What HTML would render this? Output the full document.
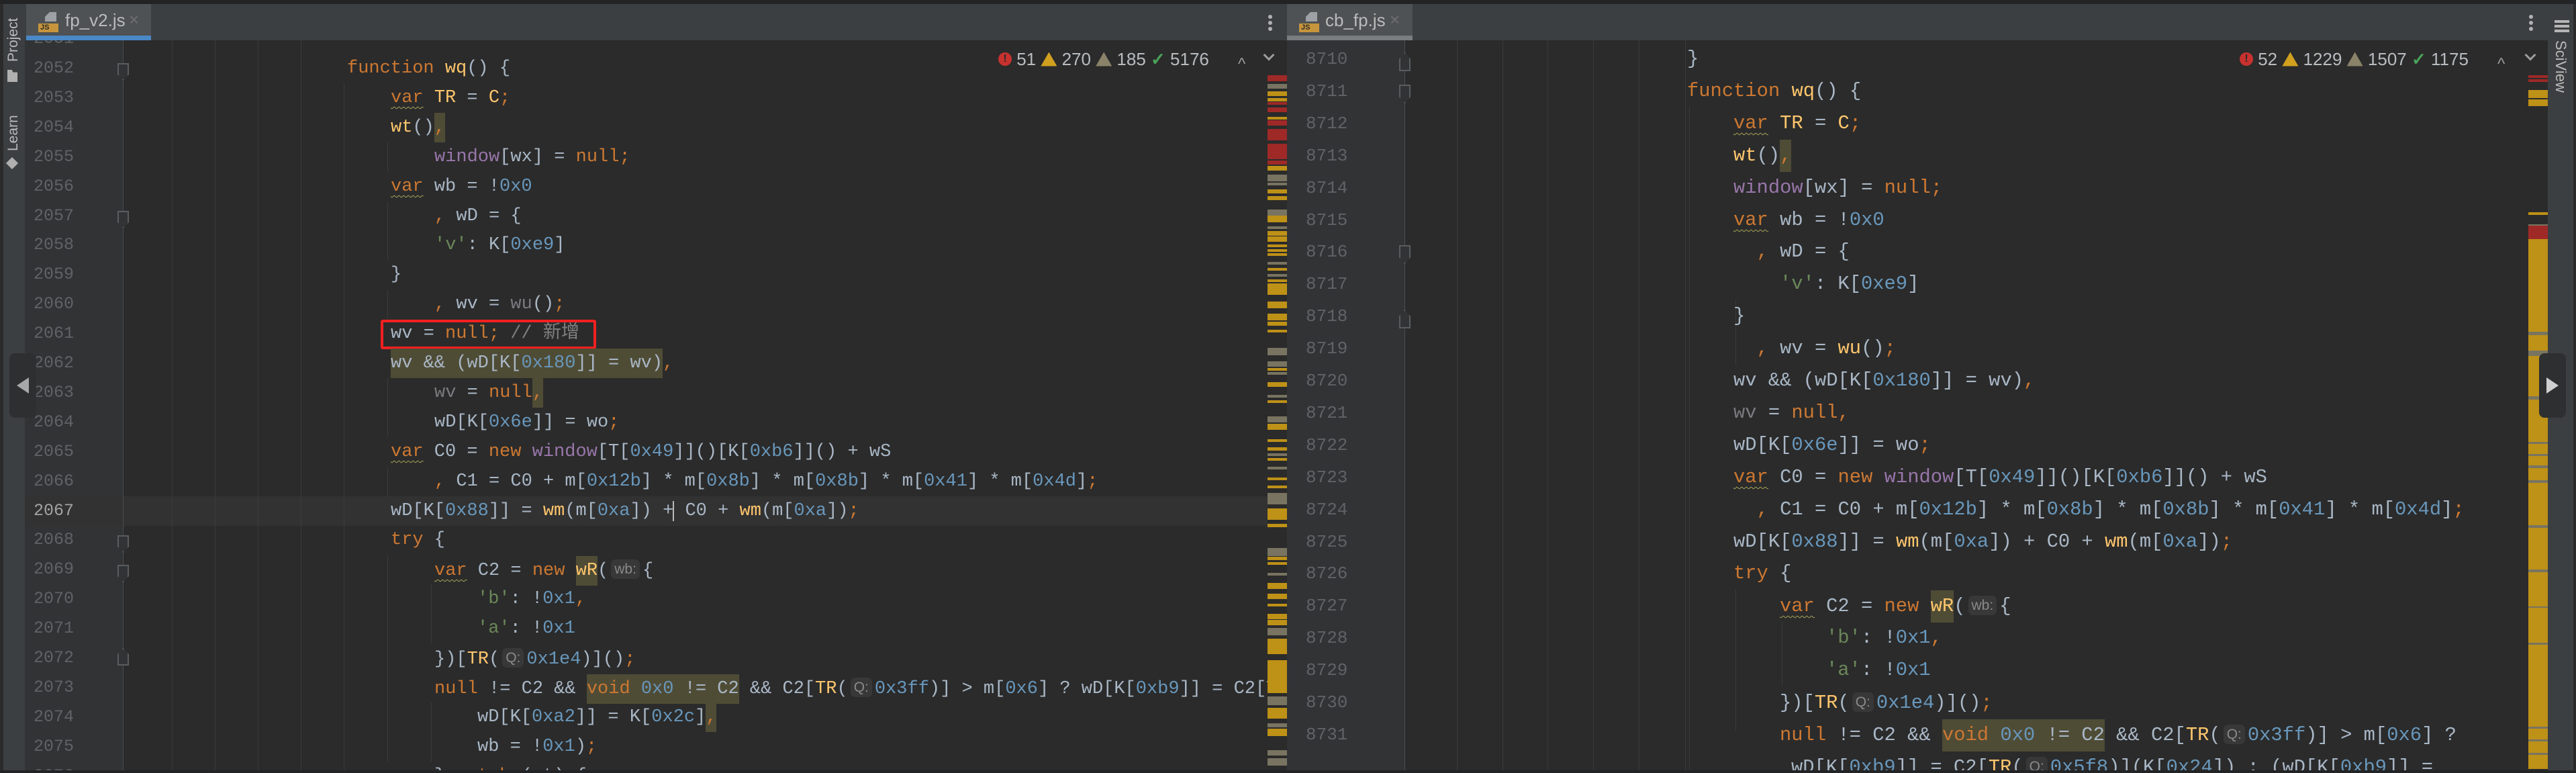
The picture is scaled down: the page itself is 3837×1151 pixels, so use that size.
<!DOCTYPE html>
<html><head><meta charset="utf-8"><style>
*{margin:0;padding:0;box-sizing:border-box}
body{width:3837px;height:1151px;background:#2b2b2b;position:relative;overflow:hidden;font-family:"Liberation Sans",sans-serif}
.a{position:absolute}
.lp{position:absolute;left:0;top:60px;width:1888px;height:1087px;overflow:hidden}
.rp{position:absolute;left:1917px;top:60px;width:1849px;height:1087px;overflow:hidden}
.l{position:absolute;white-space:pre;font-family:"Liberation Mono","Noto Sans CJK SC",monospace;color:#a9b7c6}
.lp .l{font-size:27px;line-height:44px;height:44px}
.rp .l{font-size:28.8px;line-height:48px;height:48px}
.ln{position:absolute;font-family:"Liberation Mono",monospace;color:#606366;white-space:pre}
.lp .ln{font-size:25px;line-height:44px;left:50px}
.rp .ln{font-size:26px;line-height:48px;left:28px}
.k{color:#cc7832}.n{color:#6897bb}.s{color:#6a8759}.f{color:#ffc66d}.p{color:#9876aa}.c{color:#808080}.g{color:#7a7a80}
.w{text-decoration:underline wavy #a8a45a;text-decoration-thickness:1px;text-underline-offset:6px}
.h{background:#4f4c36;display:inline-block}
.hint{font-family:"Liberation Sans",sans-serif;font-size:21px;color:#8a8a8a;background:#383838;border-radius:7px;padding:3px 5px;margin:0 4px;vertical-align:2px}
.gd{position:absolute;width:1px;background:#393b3c}
.sm{position:absolute;height:6px}
.y{background:#be9117}.r{background:#9e2927}.q{background:#787461}
.st{position:absolute;top:70px;height:36px;display:flex;align-items:center;font-size:26px;color:#b8bcc0;white-space:pre}
</style></head><body>
<div class="a" style="left:0;top:0;width:3837px;height:6px;background:#222325"></div>
<div class="a" style="left:0;top:6px;width:3837px;height:54px;background:#3c3f41"></div>
<div class="a" style="left:0;top:1147px;width:3837px;height:4px;background:#222325"></div>
<div class="a" style="left:0;top:6px;width:5px;height:1141px;background:#2b2b2b"></div>
<div class="a" style="left:5px;top:6px;width:33px;height:1141px;background:#3c3f41"></div>
<div class="a" style="left:8px;top:92px;transform:rotate(-90deg);transform-origin:left top;font-size:21px;color:#bbbbbb;white-space:pre">Project</div>
<div class="a" style="left:11px;top:104px;width:15px;height:18px;background:#b0b0b0;clip-path:polygon(0 0,45% 0,55% 20%,100% 20%,100% 100%,0 100%)"></div>
<div class="a" style="left:8px;top:225px;transform:rotate(-90deg);transform-origin:left top;font-size:21px;color:#bbbbbb;white-space:pre">Learn</div>
<div class="a" style="left:10px;top:235px;width:16px;height:16px;background:#b0b0b0;transform:rotate(45deg) scale(.8)"></div>
<div class="a" style="left:3795px;top:6px;width:38px;height:1141px;background:#3c3f41"></div>
<div class="a" style="left:3833px;top:6px;width:4px;height:1141px;background:#2b2b2b"></div>
<div class="a" style="left:3805px;top:30px;width:22px;height:18px;background:repeating-linear-gradient(#b5b5b5 0 4px,transparent 4px 7px)"></div>
<div class="a" style="left:3827px;top:60px;transform:rotate(90deg);transform-origin:left top;font-size:22px;color:#bbbbbb;white-space:pre">SciView</div>
<div class="a" style="left:39px;top:6px;width:186px;height:54px;background:#4e5254"></div>
<div class="a" style="left:39px;top:53px;width:186px;height:7px;background:#4a88c7"></div>
<div class="a" style="left:1917px;top:6px;width:187px;height:54px;background:#4e5254"></div>
<div class="a" style="left:1917px;top:53px;width:187px;height:7px;background:#7a7d80"></div>
<div class="a" style="left:67px;top:18px;width:17px;height:14px;background:#9da0a4;clip-path:polygon(40% 0,100% 0,100% 100%,0 100%,0 50%)"></div>
<div class="a" style="left:57px;top:35px;width:30px;height:13px;background:#c7953c;font-size:11px;color:#2b2b2b;line-height:13px;padding-left:3px;font-weight:bold">JS</div>
<div class="a" style="left:97px;top:15px;font-size:26px;color:#bbbbbb">fp_v2.js</div>
<div class="a" style="left:192px;top:14px;font-size:26px;color:#6e6e6e">×</div>
<div class="a" style="left:1945px;top:18px;width:17px;height:14px;background:#9da0a4;clip-path:polygon(40% 0,100% 0,100% 100%,0 100%,0 50%)"></div>
<div class="a" style="left:1935px;top:35px;width:30px;height:13px;background:#c7953c;font-size:11px;color:#2b2b2b;line-height:13px;padding-left:3px;font-weight:bold">JS</div>
<div class="a" style="left:1974px;top:15px;font-size:26px;color:#bbbbbb">cb_fp.js</div>
<div class="a" style="left:2070px;top:14px;font-size:26px;color:#6e6e6e">×</div>
<div class="a" style="left:1889px;top:22px;width:6px;height:6px;border-radius:3px;background:#afb1b3;box-shadow:0 9px 0 #afb1b3,0 18px 0 #afb1b3"></div>
<div class="a" style="left:3767px;top:22px;width:6px;height:6px;border-radius:3px;background:#afb1b3;box-shadow:0 9px 0 #afb1b3,0 18px 0 #afb1b3"></div>

<div class="lp">
<div class="a" style="left:37px;top:0;width:146px;height:1087px;background:#313335"></div>
<div class="a" style="left:37px;top:679px;width:1851px;height:44px;background:#323232"></div>
<div class="gd" style="left:183px;top:0;height:1087px;background:#4a4c4e"></div>
<div class="gd" style="left:256px;top:0;height:1087px"></div>
<div class="gd" style="left:320px;top:0;height:1087px"></div>
<div class="gd" style="left:384px;top:0;height:1087px"></div>
<div class="gd" style="left:448px;top:0;height:1087px"></div>
<div class="gd" style="left:512px;top:64px;height:1023px"></div>
<div class="gd" style="left:577px;top:152px;height:44px"></div>
<div class="gd" style="left:577px;top:240px;height:88px"></div>
<div class="gd" style="left:577px;top:371px;height:44px"></div>
<div class="gd" style="left:577px;top:503px;height:88px"></div>
<div class="gd" style="left:577px;top:635px;height:44px"></div>
<div class="gd" style="left:577px;top:766px;height:308px"></div>
<div class="gd" style="left:642px;top:810px;height:88px"></div>
<div class="gd" style="left:642px;top:986px;height:88px"></div>
<div class="a" style="left:175px;top:34px;width:17px;height:26px;border:2px solid #5a5d60;clip-path:polygon(0 0,100% 0,100% 65%,50% 100%,0 65%);background:#313335"></div>
<div class="a" style="left:175px;top:254px;width:17px;height:26px;border:2px solid #5a5d60;clip-path:polygon(0 0,100% 0,100% 65%,50% 100%,0 65%);background:#313335"></div>
<div class="a" style="left:175px;top:737px;width:17px;height:26px;border:2px solid #5a5d60;clip-path:polygon(0 0,100% 0,100% 65%,50% 100%,0 65%);background:#313335"></div>
<div class="a" style="left:175px;top:781px;width:17px;height:26px;border:2px solid #5a5d60;clip-path:polygon(0 0,100% 0,100% 65%,50% 100%,0 65%);background:#313335"></div>
<div class="a" style="left:175px;top:905px;width:17px;height:26px;border:2px solid #5a5d60;clip-path:polygon(50% 0,100% 35%,100% 100%,0 100%,0 35%);background:#313335"></div>
<div class="ln" style="top:-24px">2051</div>
<div class="ln" style="top:20px">2052</div><div class="ln" style="top:64px">2053</div><div class="ln" style="top:108px">2054</div><div class="ln" style="top:152px">2055</div><div class="ln" style="top:196px">2056</div><div class="ln" style="top:240px">2057</div><div class="ln" style="top:283px">2058</div><div class="ln" style="top:327px">2059</div><div class="ln" style="top:371px">2060</div><div class="ln" style="top:415px">2061</div><div class="ln" style="top:459px">2062</div><div class="ln" style="top:503px">2063</div><div class="ln" style="top:547px">2064</div><div class="ln" style="top:591px">2065</div><div class="ln" style="top:635px">2066</div><div class="ln" style="top:679px;color:#a4a3a3">2067</div><div class="ln" style="top:722px">2068</div><div class="ln" style="top:766px">2069</div><div class="ln" style="top:810px">2070</div><div class="ln" style="top:854px">2071</div><div class="ln" style="top:898px">2072</div><div class="ln" style="top:942px">2073</div><div class="ln" style="top:986px">2074</div><div class="ln" style="top:1030px">2075</div><div class="ln" style="top:1074px">2076</div>
<div class="l" style="top:20px;left:517px"><span class="k">function </span><span class="f">wq</span>() {</div>
<div class="l" style="top:64px;left:582px"><span class="k w">var</span> <span class="f">TR</span> = <span class="f">C</span><span class="k">;</span></div>
<div class="l" style="top:108px;left:582px"><span class="f">wt</span>()<span class="k h">,</span></div>
<div class="l" style="top:152px;left:647px"><span class="p">window</span>[wx] = <span class="k">null;</span></div>
<div class="l" style="top:196px;left:582px"><span class="k w">var</span> wb = !<span class="n">0x0</span></div>
<div class="l" style="top:240px;left:647px"><span class="k">,</span> wD = {</div>
<div class="l" style="top:283px;left:647px"><span class="s">'v'</span>: K[<span class="n">0xe9</span>]</div>
<div class="l" style="top:327px;left:582px">}</div>
<div class="l" style="top:371px;left:647px"><span class="k">,</span> wv = <span class="g">wu</span>()<span class="k">;</span></div>
<div class="l" style="top:415px;left:582px">wv = <span class="k">null;</span> <span class="c">// 新增</span></div>
<div class="a" style="left:567px;top:416px;width:321px;height:44px;border:4px solid #f22020;border-radius:3px"></div>
<div class="l" style="top:459px;left:582px"><span class="h">wv &amp;&amp; (wD[K[<span class="n">0x180</span>]] = wv)</span><span class="k">,</span></div>
<div class="l" style="top:503px;left:647px"><span class="g">wv</span> = <span class="k">null</span><span class="k h">,</span></div>
<div class="l" style="top:547px;left:647px">wD[K[<span class="n">0x6e</span>]] = wo<span class="k">;</span></div>
<div class="l" style="top:591px;left:582px"><span class="k w">var</span> C0 = <span class="k">new </span><span class="p">window</span>[T[<span class="n">0x49</span>]]()[K[<span class="n">0xb6</span>]]() + wS</div>
<div class="l" style="top:635px;left:647px"><span class="k">,</span> C1 = C0 + m[<span class="n">0x12b</span>] * m[<span class="n">0x8b</span>] * m[<span class="n">0x8b</span>] * m[<span class="n">0x41</span>] * m[<span class="n">0x4d</span>]<span class="k">;</span></div>
<div class="l" style="top:679px;left:582px">wD[K[<span class="n">0x88</span>]] = <span class="f">wm</span>(m[<span class="n">0xa</span>]) +<span style="border-left:2px solid #bbbbbb;margin-left:-1px"></span> C0 + <span class="f">wm</span>(m[<span class="n">0xa</span>])<span class="k">;</span></div>
<div class="l" style="top:722px;left:582px"><span class="k">try</span> {</div>
<div class="l" style="top:766px;left:647px"><span class="k w">var</span> C2 = <span class="k">new </span><span class="f h">wR</span>(<span class="hint">wb:</span>{</div>
<div class="l" style="top:810px;left:711px"><span class="s">'b'</span>: !<span class="n">0x1</span><span class="k">,</span></div>
<div class="l" style="top:854px;left:711px"><span class="s">'a'</span>: !<span class="n">0x1</span></div>
<div class="l" style="top:898px;left:647px">})[<span class="f">TR</span>(<span class="hint">Q:</span><span class="n">0x1e4</span>)]()<span class="k">;</span></div>
<div class="l" style="top:942px;left:647px"><span class="k">null</span> != C2 &amp;&amp; <span class="h"><span class="k">void </span><span class="n">0x0</span> != C2</span> &amp;&amp; C2[<span class="f">TR</span>(<span class="hint">Q:</span><span class="n">0x3ff</span>)] &gt; m[<span class="n">0x6</span>] ? wD[K[<span class="n">0xb9</span>]] = C2[<span class="f">TR</span>(</div>
<div class="l" style="top:986px;left:711px">wD[K[<span class="n">0xa2</span>]] = K[<span class="n">0x2c</span>]<span class="k h">,</span></div>
<div class="l" style="top:1030px;left:711px">wb = !<span class="n">0x1</span>)<span class="k">;</span></div>
<div class="l" style="top:1074px;left:647px">} <span class="k">catch</span> (wt) {</div>
</div>
<div class="st" style="left:1487px">
<span style="width:20px;height:20px;border-radius:10px;background:#c7322f;color:#2b2b2b;font-size:16px;font-weight:bold;text-align:center;line-height:20px">!</span><span> 51 </span>
<span style="width:24px;height:21px;background:#d1a01f;clip-path:polygon(50% 0,100% 100%,0 100%)"></span><span> 270 </span>
<span style="width:24px;height:21px;background:#8a8269;clip-path:polygon(50% 0,100% 100%,0 100%)"></span><span> 185 </span>
<span style="color:#4aa35a;font-size:26px;font-weight:bold">✓</span><span> 5176</span>
</div>
<div class="a" style="left:1844px;top:82px;font-size:24px;color:#9a9c9e">^</div>
<div class="a" style="left:1884px;top:76px;width:12px;height:12px;border-right:3px solid #9a9c9e;border-bottom:3px solid #9a9c9e;transform:rotate(45deg)"></div>
<div id="ls" class="a" style="left:1888px;top:0;width:29px;height:1147px">
<div class="sm r" style="top:112px;height:9px"></div><div class="sm q" style="top:125px;height:7px"></div><div class="sm y" style="top:136px;height:7px"></div><div class="sm y" style="top:146px;height:5px"></div><div class="sm r" style="top:152px;height:4px"></div><div class="sm r" style="top:160px;height:7px"></div><div class="sm y" style="top:174px;height:4px"></div><div class="sm r" style="top:179px;height:8px"></div><div class="sm r" style="top:192px;height:17px"></div><div class="sm r" style="top:214px;height:23px"></div><div class="sm r" style="top:239px;height:6px"></div><div class="sm y" style="top:247px;height:7px"></div><div class="sm q" style="top:260px;height:10px"></div><div class="sm q" style="top:272px;height:4px"></div><div class="sm y" style="top:282px;height:6px"></div><div class="sm y" style="top:292px;height:6px"></div><div class="sm q" style="top:312px;height:9px"></div><div class="sm y" style="top:321px;height:10px"></div><div class="sm q" style="top:337px;height:4px"></div><div class="sm y" style="top:344px;height:7px"></div><div class="sm y" style="top:352px;height:8px"></div><div class="sm y" style="top:364px;height:4px"></div><div class="sm y" style="top:371px;height:4px"></div><div class="sm y" style="top:377px;height:4px"></div><div class="sm q" style="top:390px;height:4px"></div><div class="sm y" style="top:399px;height:4px"></div><div class="sm q" style="top:408px;height:4px"></div><div class="sm y" style="top:416px;height:4px"></div><div class="sm y" style="top:422px;height:17px"></div><div class="sm y" style="top:449px;height:10px"></div><div class="sm y" style="top:467px;height:10px"></div><div class="sm y" style="top:479px;height:6px"></div><div class="sm y" style="top:491px;height:4px"></div><div class="sm q" style="top:518px;height:11px"></div><div class="sm q" style="top:538px;height:8px"></div><div class="sm y" style="top:548px;height:4px"></div><div class="sm q" style="top:554px;height:4px"></div><div class="sm y" style="top:569px;height:7px"></div><div class="sm q" style="top:588px;height:4px"></div><div class="sm y" style="top:596px;height:4px"></div><div class="sm q" style="top:620px;height:9px"></div><div class="sm y" style="top:631px;height:9px"></div><div class="sm y" style="top:654px;height:4px"></div><div class="sm y" style="top:666px;height:5px"></div><div class="sm q" style="top:675px;height:4px"></div><div class="sm y" style="top:682px;height:4px"></div><div class="sm q" style="top:695px;height:4px"></div><div class="sm y" style="top:711px;height:4px"></div><div class="sm y" style="top:723px;height:4px"></div><div class="sm q" style="top:734px;height:17px"></div><div class="sm y" style="top:757px;height:17px"></div><div class="sm y" style="top:780px;height:5px"></div><div class="sm q" style="top:816px;height:12px"></div><div class="sm y" style="top:829px;height:5px"></div><div class="sm y" style="top:837px;height:4px"></div><div class="sm q" style="top:853px;height:4px"></div><div class="sm y" style="top:868px;height:9px"></div><div class="sm y" style="top:884px;height:8px"></div><div class="sm y" style="top:899px;height:4px"></div><div class="sm y" style="top:914px;height:8px"></div><div class="sm y" style="top:923px;height:8px"></div><div class="sm q" style="top:935px;height:11px"></div><div class="sm y" style="top:951px;height:23px"></div><div class="sm y" style="top:983px;height:49px"></div><div class="sm q" style="top:1037px;height:13px"></div><div class="sm y" style="top:1054px;height:16px"></div><div class="sm q" style="top:1077px;height:6px"></div><div class="sm y" style="top:1085px;height:11px"></div><div class="sm q" style="top:1117px;height:8px"></div><div class="sm q" style="top:1129px;height:11px"></div>
</div>
<style>#ls .sm,#rs .sm{left:0;width:29px}</style>

<div class="rp">
<div class="a" style="left:0;top:0;width:175px;height:1087px;background:#313335"></div>
<div class="gd" style="left:175px;top:0;height:1087px;background:#4a4c4e"></div>
<div class="gd" style="left:253px;top:0;height:1087px"></div>
<div class="gd" style="left:321px;top:0;height:1087px"></div>
<div class="gd" style="left:388px;top:0;height:1087px"></div>
<div class="gd" style="left:456px;top:0;height:1087px"></div>
<div class="gd" style="left:524px;top:0;height:1087px"></div>
<div class="gd" style="left:593px;top:0;height:1087px"></div>
<div class="gd" style="left:599px;top:100px;height:987px"></div>
<div class="gd" style="left:668px;top:387px;height:96px"></div>
<div class="gd" style="left:668px;top:818px;height:210px"></div>
<div class="gd" style="left:737px;top:866px;height:96px"></div>
<div class="a" style="left:167px;top:18px;width:17px;height:28px;border:2px solid #5a5d60;clip-path:polygon(50% 0,100% 35%,100% 100%,0 100%,0 35%);background:#313335"></div>
<div class="a" style="left:167px;top:66px;width:17px;height:28px;border:2px solid #5a5d60;clip-path:polygon(0 0,100% 0,100% 65%,50% 100%,0 65%);background:#313335"></div>
<div class="a" style="left:167px;top:305px;width:17px;height:28px;border:2px solid #5a5d60;clip-path:polygon(0 0,100% 0,100% 65%,50% 100%,0 65%);background:#313335"></div>
<div class="a" style="left:167px;top:401px;width:17px;height:28px;border:2px solid #5a5d60;clip-path:polygon(50% 0,100% 35%,100% 100%,0 100%,0 35%);background:#313335"></div>
<div class="ln" style="top:4px">8710</div><div class="ln" style="top:52px">8711</div><div class="ln" style="top:100px">8712</div><div class="ln" style="top:148px">8713</div><div class="ln" style="top:196px">8714</div><div class="ln" style="top:244px">8715</div><div class="ln" style="top:291px">8716</div><div class="ln" style="top:339px">8717</div><div class="ln" style="top:387px">8718</div><div class="ln" style="top:435px">8719</div><div class="ln" style="top:483px">8720</div><div class="ln" style="top:531px">8721</div><div class="ln" style="top:579px">8722</div><div class="ln" style="top:627px">8723</div><div class="ln" style="top:675px">8724</div><div class="ln" style="top:723px">8725</div><div class="ln" style="top:770px">8726</div><div class="ln" style="top:818px">8727</div><div class="ln" style="top:866px">8728</div><div class="ln" style="top:914px">8729</div><div class="ln" style="top:962px">8730</div><div class="ln" style="top:1010px">8731</div>
<div class="l" style="top:4px;left:596px">}</div>
<div class="l" style="top:52px;left:596px"><span class="k">function </span><span class="f">wq</span>() {</div>
<div class="l" style="top:100px;left:665px"><span class="k w">var</span> <span class="f">TR</span> = <span class="f">C</span><span class="k">;</span></div>
<div class="l" style="top:148px;left:665px"><span class="f">wt</span>()<span class="k h">,</span></div>
<div class="l" style="top:196px;left:665px"><span class="p">window</span>[wx] = <span class="k">null;</span></div>
<div class="l" style="top:244px;left:665px"><span class="k w">var</span> wb = !<span class="n">0x0</span></div>
<div class="l" style="top:291px;left:665px">  <span class="k">,</span> wD = {</div>
<div class="l" style="top:339px;left:734px"><span class="s">'v'</span>: K[<span class="n">0xe9</span>]</div>
<div class="l" style="top:387px;left:665px">}</div>
<div class="l" style="top:435px;left:665px">  <span class="k">,</span> wv = <span class="f">wu</span>()<span class="k">;</span></div>
<div class="l" style="top:483px;left:665px">wv &amp;&amp; (wD[K[<span class="n">0x180</span>]] = wv)<span class="k">,</span></div>
<div class="l" style="top:531px;left:665px"><span class="g">wv</span> = <span class="k">null,</span></div>
<div class="l" style="top:579px;left:665px">wD[K[<span class="n">0x6e</span>]] = wo<span class="k">;</span></div>
<div class="l" style="top:627px;left:665px"><span class="k w">var</span> C0 = <span class="k">new </span><span class="p">window</span>[T[<span class="n">0x49</span>]]()[K[<span class="n">0xb6</span>]]() + wS</div>
<div class="l" style="top:675px;left:665px">  <span class="k">,</span> C1 = C0 + m[<span class="n">0x12b</span>] * m[<span class="n">0x8b</span>] * m[<span class="n">0x8b</span>] * m[<span class="n">0x41</span>] * m[<span class="n">0x4d</span>]<span class="k">;</span></div>
<div class="l" style="top:723px;left:665px">wD[K[<span class="n">0x88</span>]] = <span class="f">wm</span>(m[<span class="n">0xa</span>]) + C0 + <span class="f">wm</span>(m[<span class="n">0xa</span>])<span class="k">;</span></div>
<div class="l" style="top:770px;left:665px"><span class="k">try</span> {</div>
<div class="l" style="top:818px;left:734px"><span class="k w">var</span> C2 = <span class="k">new </span><span class="f h">wR</span>(<span class="hint">wb:</span>{</div>
<div class="l" style="top:866px;left:803px"><span class="s">'b'</span>: !<span class="n">0x1</span><span class="k">,</span></div>
<div class="l" style="top:914px;left:803px"><span class="s">'a'</span>: !<span class="n">0x1</span></div>
<div class="l" style="top:962px;left:734px">})[<span class="f">TR</span>(<span class="hint">Q:</span><span class="n">0x1e4</span>)]()<span class="k">;</span></div>
<div class="l" style="top:1010px;left:734px"><span class="k">null</span> != C2 &amp;&amp; <span class="h"><span class="k">void </span><span class="n">0x0</span> != C2</span> &amp;&amp; C2[<span class="f">TR</span>(<span class="hint">Q:</span><span class="n">0x3ff</span>)] &gt; m[<span class="n">0x6</span>] ?</div>
<div class="l" style="top:1058px;left:751px">wD[K[<span class="n">0xb9</span>]] = C2[<span class="f">TR</span>(<span class="hint">Q:</span><span class="n">0x5f8</span>)](K[<span class="n">0x24</span>]) : (wD[K[<span class="n">0xb9</span>]] =</div>
</div>
<div class="st" style="left:3336px">
<span style="width:20px;height:20px;border-radius:10px;background:#c7322f;color:#2b2b2b;font-size:16px;font-weight:bold;text-align:center;line-height:20px">!</span><span> 52 </span>
<span style="width:24px;height:21px;background:#d1a01f;clip-path:polygon(50% 0,100% 100%,0 100%)"></span><span> 1229 </span>
<span style="width:24px;height:21px;background:#8a8269;clip-path:polygon(50% 0,100% 100%,0 100%)"></span><span> 1507 </span>
<span style="color:#4aa35a;font-size:26px;font-weight:bold">✓</span><span> 1175</span>
</div>
<div class="a" style="left:3720px;top:82px;font-size:24px;color:#9a9c9e">^</div>
<div class="a" style="left:3763px;top:76px;width:12px;height:12px;border-right:3px solid #9a9c9e;border-bottom:3px solid #9a9c9e;transform:rotate(45deg)"></div>
<div id="rs" class="a" style="left:3766px;top:0;width:29px;height:1147px">
<div class="sm r" style="top:112px;height:4px"></div><div class="sm r" style="top:118px;height:4px"></div><div class="sm y" style="top:134px;height:12px"></div><div class="sm y" style="top:148px;height:10px"></div><div class="sm y" style="top:316px;height:4px"></div><div class="sm q" style="top:334px;height:2px"></div><div class="sm r" style="top:336px;height:20px"></div><div class="sm y" style="top:356px;height:789px"></div>
<div class="sm q" style="top:494px;height:5px"></div><div class="sm q" style="top:522px;height:8px"></div><div class="sm q" style="top:590px;height:5px"></div><div class="sm q" style="top:658px;height:3px"></div><div class="sm q" style="top:676px;height:3px"></div><div class="sm q" style="top:693px;height:4px"></div><div class="sm q" style="top:715px;height:4px"></div><div class="sm q" style="top:782px;height:4px"></div><div class="sm q" style="top:848px;height:4px"></div><div class="sm q" style="top:903px;height:2px"></div><div class="sm q" style="top:957px;height:3px"></div><div class="sm q" style="top:1082px;height:3px"></div><div class="sm q" style="top:1101px;height:3px"></div><div class="sm q" style="top:1121px;height:3px"></div>
</div>
<div class="a" style="left:14px;top:526px;width:40px;height:96px;background:#2e2f30;border-radius:8px"></div>
<div class="a" style="left:25px;top:562px;width:18px;height:24px;background:#a6a8aa;clip-path:polygon(100% 0,100% 100%,0 50%)"></div>
<div class="a" style="left:3782px;top:526px;width:40px;height:96px;background:#2e2f30;border-radius:8px"></div>
<div class="a" style="left:3793px;top:562px;width:18px;height:24px;background:#d0d0d0;clip-path:polygon(0 0,100% 50%,0 100%)"></div>
</body></html>
